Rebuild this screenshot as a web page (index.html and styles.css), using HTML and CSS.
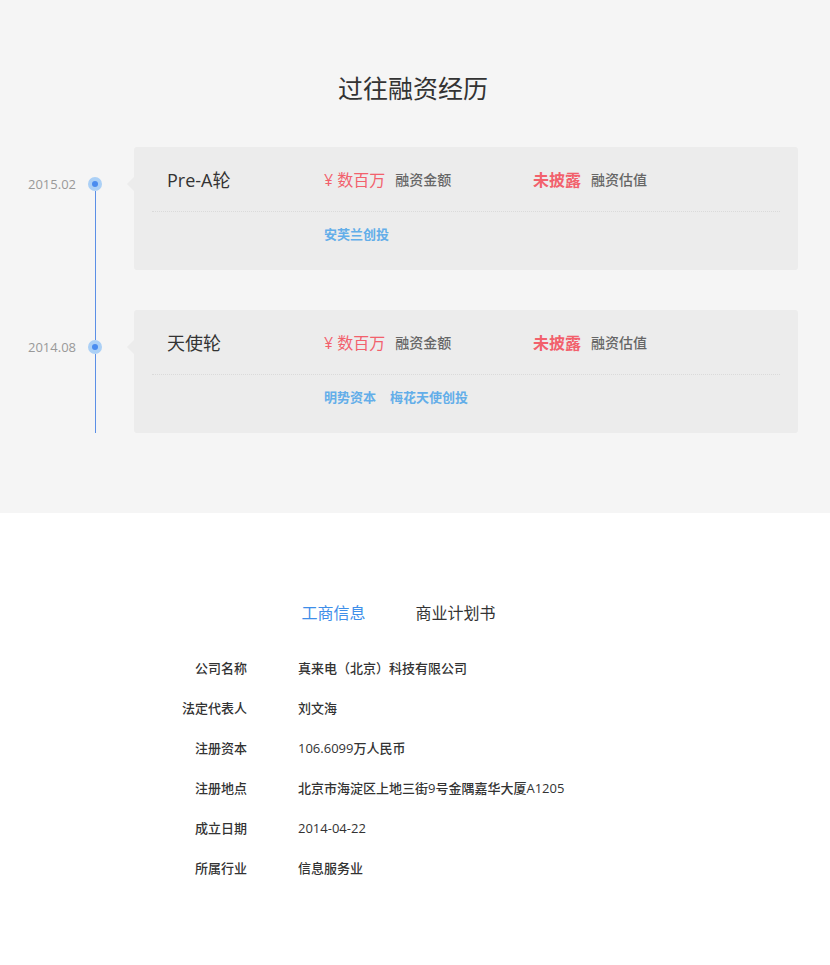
FILE: index.html
```html
<!DOCTYPE html>
<html lang="zh-CN">
<head>
<meta charset="utf-8">
<title>过往融资经历</title>
<link rel="stylesheet" href="styles.css">
</head>
<body>
<section class="financing">
  <h2 class="section-title">过往融资经历</h2>
  <div class="timeline">
    <div class="round">
      <div class="round-date">2015.02</div>
      <div class="rail rail-first">
        <span class="rail-top"></span>
        <span class="rail-dot"></span>
        <span class="rail-bottom"></span>
      </div>
      <div class="card">
        <div class="card-head">
          <div class="round-name">Pre-A轮</div>
          <div class="stat"><span class="stat-value">¥ 数百万</span><span class="stat-label">融资金额</span></div>
          <div class="stat"><span class="stat-value strong">未披露</span><span class="stat-label">融资估值</span></div>
        </div>
        <div class="card-foot">
          <div class="investors"><span>安芙兰创投</span></div>
        </div>
      </div>
    </div>
    <div class="round round-last">
      <div class="round-date">2014.08</div>
      <div class="rail">
        <span class="rail-top"></span>
        <span class="rail-dot"></span>
        <span class="rail-bottom"></span>
      </div>
      <div class="card">
        <div class="card-head">
          <div class="round-name">天使轮</div>
          <div class="stat"><span class="stat-value">¥ 数百万</span><span class="stat-label">融资金额</span></div>
          <div class="stat"><span class="stat-value strong">未披露</span><span class="stat-label">融资估值</span></div>
        </div>
        <div class="card-foot">
          <div class="investors"><span>明势资本</span><span>梅花天使创投</span></div>
        </div>
      </div>
    </div>
  </div>
</section>
<section class="business">
  <div class="tabs">
    <span class="tab active">工商信息</span>
    <span class="tab">商业计划书</span>
  </div>
  <dl class="info-list">
    <dt>公司名称</dt><dd>真来电（北京）科技有限公司</dd>
    <dt>法定代表人</dt><dd>刘文海</dd>
    <dt>注册资本</dt><dd>106.6099万人民币</dd>
    <dt>注册地点</dt><dd>北京市海淀区上地三街9号金隅嘉华大厦A1205</dd>
    <dt>成立日期</dt><dd>2014-04-22</dd>
    <dt>所属行业</dt><dd>信息服务业</dd>
  </dl>
</section>
</body>
</html>
```
FILE: styles.css
```css
* { box-sizing: border-box; }
html, body { margin: 0; padding: 0; }
body {
  font-family: "Open Sans", "Noto Sans CJK SC", sans-serif;
  color: #333;
  background: #fff;
  width: 830px;
  height: 965px;
}

.financing {
  background: #f5f5f5;
  height: 513px;
  padding-top: 71px;
}
.section-title {
  margin: 0;
  padding-right: 4px;
  text-align: center;
  font-size: 25px;
  line-height: 34px;
  font-weight: normal;
  color: #333;
}
.timeline {
  margin-top: 42px;
  padding-left: 28px;
}
.round {
  display: flex;
  align-items: stretch;
}
.round-date {
  width: 48px;
  padding-top: 28px;
  line-height: 18px;
  font-size: 13px;
  color: #999;
  text-align: right;
}
.rail {
  width: 14px;
  margin-left: 12px;
  display: flex;
  flex-direction: column;
}
.rail-top {
  height: 30px;
  width: 1px;
  margin-left: 7px;
  background: #5b8fe6;
}
.rail-first .rail-top { background: transparent; }
.rail-dot {
  width: 14px;
  height: 14px;
  border-radius: 50%;
  background: #abd0f6;
  display: flex;
  align-items: center;
  justify-content: center;
}
.rail-dot::after {
  content: "";
  width: 6px;
  height: 6px;
  border-radius: 50%;
  background: #4a8cef;
}
.rail-bottom {
  flex: 1;
  width: 1px;
  margin-left: 7px;
  background: #5b8fe6;
}
.card {
  position: relative;
  margin: 0 0 40px 32px;
  width: 664px;
  height: 123px;
  background: #ececec;
  border-radius: 3px;
  padding: 0 18px;
}
.round-last .card { margin-bottom: 0; }
.card::before {
  content: "";
  position: absolute;
  left: -7px;
  top: 30px;
  border-style: solid;
  border-width: 7px 7px 7px 0;
  border-color: transparent #ececec transparent transparent;
}
.card-head {
  display: grid;
  grid-template-columns: 157px 209px 1fr;
  padding: 15px 0 0 15px;
  height: 65px;
  border-bottom: 1px dotted #dadada;
  align-items: center;
  align-content: start;
}
.card-head > div { height: 34px; display: flex; align-items: center; }
.round-name {
  font-size: 18px;
  color: #333;
}
.stat-value {
  font-size: 16px;
  color: #f2616c;
}
.stat-value.strong { font-weight: bold; }
.stat-label {
  margin-left: 10px;
  font-size: 14px;
  font-weight: 500;
  color: #666;
}
.card-foot {
  padding: 12px 0 0 172px;
}
.investors {
  display: flex;
  gap: 14px;
  line-height: 20px;
  font-size: 13px;
  font-weight: bold;
  color: #63aee9;
}

.business {
  padding-top: 88px;
}
.tabs {
  display: flex;
  justify-content: center;
  gap: 50px;
  padding-right: 33px;
  line-height: 24px;
  font-size: 16px;
}
.tab { color: #333; }
.tab.active { color: #3e8ee9; }
.info-list {
  margin: 33px 0 0 0;
  display: grid;
  grid-template-columns: 247px 1fr;
  column-gap: 51px;
  row-gap: 20px;
  line-height: 20px;
  font-size: 13px;
  font-weight: 500;
}
.info-list dt {
  text-align: right;
  color: #333;
}
.info-list dd {
  margin: 0;
  color: #333;
}
```
